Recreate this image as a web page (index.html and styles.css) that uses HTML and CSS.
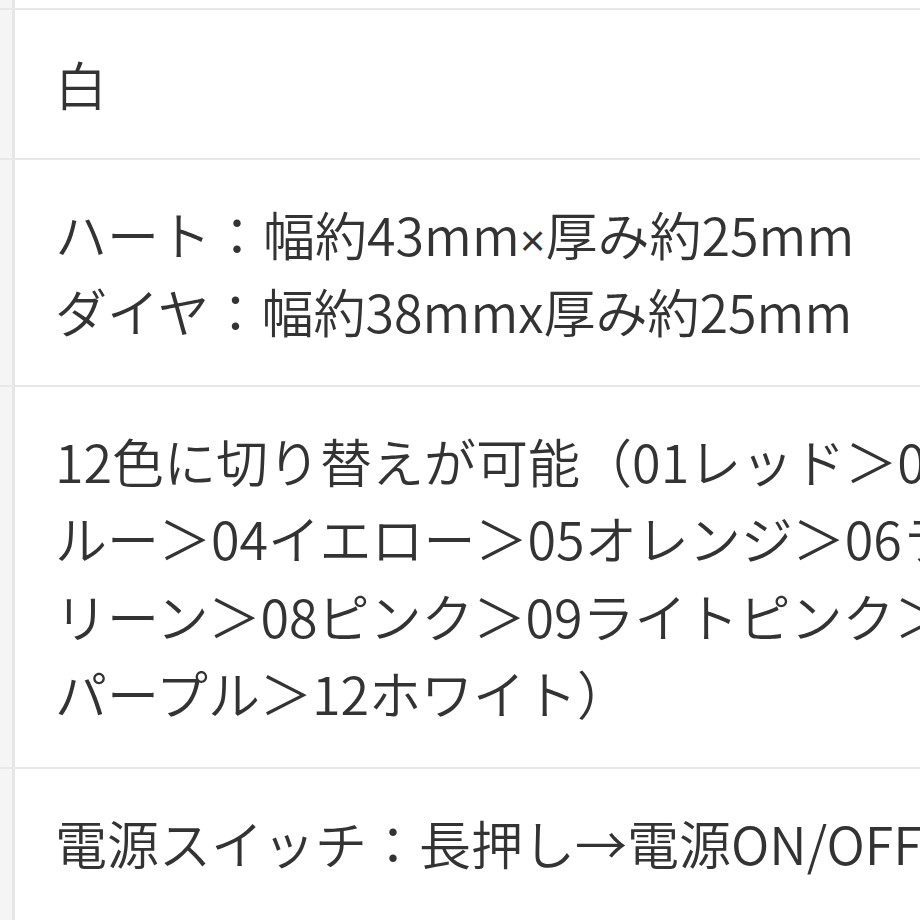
FILE: index.html
```html
<!DOCTYPE html>
<html lang="ja">
<head>
<meta charset="utf-8">
<title>商品仕様</title>
<link rel="stylesheet" href="styles.css">
</head>
<body>
<div class="sheet">
  <div class="row"><div class="cell">白</div></div>
  <div class="row"><div class="cell">ハート：幅約43mm<span class="times">×</span>厚み約25mm<br>ダイヤ：幅約38mmx厚み約25mm</div></div>
  <div class="row"><div class="cell">12色に切り替えが可能（01レッド＞02グリーン＞03ブ<br>ルー＞04イエロー＞05オレンジ＞06ライトブルー＞07グ<br>リーン＞08ピンク＞09ライトピンク＞10ライトグリーン＞11<br>パープル＞12ホワイト）</div></div>
  <div class="row"><div class="cell">電源スイッチ：長押し→電源ON/OFF</div></div>
</div>
</body>
</html>
```
FILE: styles.css
```css
html, body {
  margin: 0;
  padding: 0;
  overflow: hidden;
  background: #fff;
}

.sheet {
  width: 100%;
  min-height: 920px;
  padding-top: 8px;
  background: linear-gradient(to right, #f5f5f5 0, #f5f5f5 12px, #e6e6e6 12px, #e6e6e6 15px, #fff 15px);
  font-family: "Noto Sans CJK JP", "Noto Sans", sans-serif;
  font-weight: 350;
  color: #333;
}

.row {
  border-top: 2px solid #e8e8e8;
}

.cell {
  padding: 35px 0 35px 55px;
  font-size: 52px;
  line-height: 77.5px;
  white-space: nowrap;
}

.times {
  font-family: "Liberation Sans", sans-serif;
  font-size: 44px;
  line-height: 0;
}
```
